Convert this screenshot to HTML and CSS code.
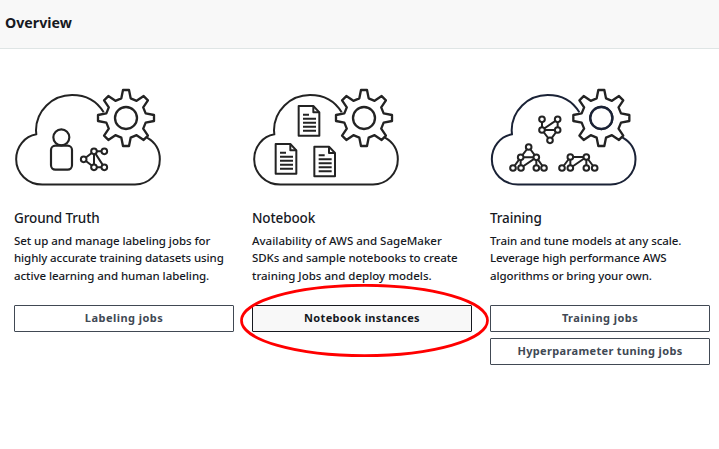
FILE: index.html
```
<!DOCTYPE html>
<html lang="en">
<head>
<meta charset="utf-8">
<title>Overview</title>
<link rel="stylesheet" href="styles.css">
</head>
<body>
<svg class="defs" aria-hidden="true">
  <defs>
    <g id="cloud"><path d="M296 97C275 62 241 45 201 45C141 45 93 93 93 151L94 163C59 169 33.500 200 33.500 238C33.500 280 68 313.500 112 313.500H390C432 313.500 464.500 280 464.500 238C464.500 210 450 186 425 172"/></g>
    <g id="gear">
      <path d="M-9-84H9L14-59L31.8-51.6L53-65.8L65.8-53L51.6-31.8L59-14L84-9V9L59 14L51.6 31.8L65.8 53L53 65.8L31.8 51.6L14 59L9 84H-9L-14 59L-31.8 51.6L-53 65.8L-65.8 53L-51.6 31.8L-59 14L-84 9V-9L-59-14L-51.6-31.8L-65.8-53L-53-65.8L-31.8-51.6L-14-59Z"/>
      <circle r="33"/>
    </g>
    <g id="page">
      <path d="M2 2H46L64 21V91H2Z"/>
      <path d="M46 2V21H64M15 28H33M15 40H54M15 52H54M15 64H54M15 76H54"/>
    </g>
    <circle id="node" r="8.5"/>
  </defs>
</svg>
<header class="header"><h1>Overview</h1></header>
<main class="columns">
  <section class="card">
    <svg class="art" viewBox="27 0 480 345">
      <use href="#cloud"/><use class="gear" href="#gear" x="363" y="114"/>
      <g class="person"><circle cx="169" cy="172" r="24"/><rect x="138" y="197" width="63" height="72" rx="13"/></g>
      <g class="graph"><path d="M236 238L267 214H298M236 238L267 262H298L267 214V262"/>
        <use href="#node" x="236" y="238"/><use href="#node" x="267" y="214"/><use href="#node" x="298" y="214"/><use href="#node" x="267" y="262"/><use href="#node" x="298" y="262"/></g>
    </svg>
    <h2>Ground Truth</h2>
    <p><span class="snug">Set up and manage labeling jobs for</span><br><span class="tight">highly accurate training datasets using</span><br><span class="snug">active learning and human labeling.</span></p>
    <button class="wide">Labeling jobs</button>
  </section>
  <section class="card">
    <svg class="art" viewBox="21 0 480 345">
      <use href="#cloud" x="-6"/><use class="gear" href="#gear" x="357" y="114"/>
      <g class="pages"><use href="#page" x="159" y="76"/><use href="#page" x="90" y="190"/><use href="#page" x="206" y="198"/></g>
    </svg>
    <h2>Notebook</h2>
    <p><span>Availability of AWS and SageMaker</span><br><span class="snug">SDKs and sample notebooks to create</span><br><span>training Jobs and deploy models.</span></p>
    <div class="marked"><button class="active">Notebook instances</button>
      <svg class="ring" viewBox="0 0 249 74"><ellipse cx="124.5" cy="36.5" rx="123" ry="35.2"/></svg></div>
  </section>
  <section class="card">
    <svg class="art navy" viewBox="21 0 480 345">
      <use href="#cloud" x="-7"/><use class="gear dark" href="#gear" x="355" y="114"/><circle class="gear" cx="355" cy="114" r="33"/>
      <g class="graph"><path d="M177 118V150L224 118V150H177L201 181L224 150M90 264L113 232L137 201L160 232L183 264M113 264V232H160V264M113 264L160 232M237 264L262 231H310L335 264M262 264V231M262 264L310 231V264"/>
        <use href="#node" x="177" y="118"/><use href="#node" x="224" y="118"/><use href="#node" x="177" y="150"/><use href="#node" x="224" y="150"/><use href="#node" x="201" y="181"/>
        <use href="#node" x="137" y="201"/><use href="#node" x="113" y="232"/><use href="#node" x="160" y="232"/><use href="#node" x="90" y="264"/><use href="#node" x="114" y="264"/><use href="#node" x="160" y="264"/><use href="#node" x="183" y="264"/>
        <use href="#node" x="262" y="231"/><use href="#node" x="310" y="231"/><use href="#node" x="237" y="264"/><use href="#node" x="262" y="264"/><use href="#node" x="310" y="264"/><use href="#node" x="335" y="264"/></g>
    </svg>
    <h2>Training</h2>
    <p><span class="snug">Train and tune models at any scale.</span><br><span class="tight">Leverage high performance AWS</span><br><span class="tight">algorithms or bring your own.</span></p>
    <button class="wide">Training jobs</button>
    <button>Hyperparameter tuning jobs</button>
  </section>
</main>
</body>
</html>
```
FILE: styles.css
```
* { box-sizing: border-box; }
body { margin: 0; background: #fff; color: #16191f; font-family: "Noto Sans", sans-serif; }
.defs { position: absolute; width: 0; height: 0; }
.header { height: 49px; padding: 12px 5px 0; background: #f8f8f8; border-bottom: 1px solid #dfe5e5; }
h1 { margin: 0; font-size: 14.2px; line-height: 22px; font-weight: 700; }
.columns { display: grid; grid-template-columns: repeat(3, 220px); gap: 18px; padding: 31px 0 0 14px; }
.art { display: block; width: 160px; height: 115px; fill: none; stroke: #232323; stroke-width: 6; stroke-linejoin: round; }
.navy { stroke: #1a2236; }
.gear { fill: #fff; stroke-width: 7; }
.dark { stroke: #232323; }
.person { stroke-width: 6.5; }
.pages { stroke-width: 6; }
.graph { stroke: #232323; stroke-width: 6; }
.graph use { fill: #fff; }
h2 { margin: 12px 0 0; font-size: 13.5px; line-height: 22px; font-weight: 500; letter-spacing: -0.12px; }
p { height: 52.5px; margin: 3px 0 20px; font-size: 11.5px; line-height: 17.4px; font-weight: 500; white-space: nowrap; }
.snug { letter-spacing: -0.06px; }
.tight { letter-spacing: -0.1px; }
button { display: block; width: 220px; height: 27px; margin: 0 0 6px; padding: 0; background: #fff; border: 1px solid #414954; border-radius: 1px; color: #414954; font: 700 11px/24px "Noto Sans", sans-serif; letter-spacing: 0.34px; }
.wide { letter-spacing: 0.45px; }
.active { background: #f8f8f8; border-color: #16191f; color: #16191f; }
.marked { position: relative; }
.ring { position: absolute; left: -12px; top: -21px; width: 249px; height: 74px; fill: none; stroke: #f00; stroke-width: 2.7; }
```
